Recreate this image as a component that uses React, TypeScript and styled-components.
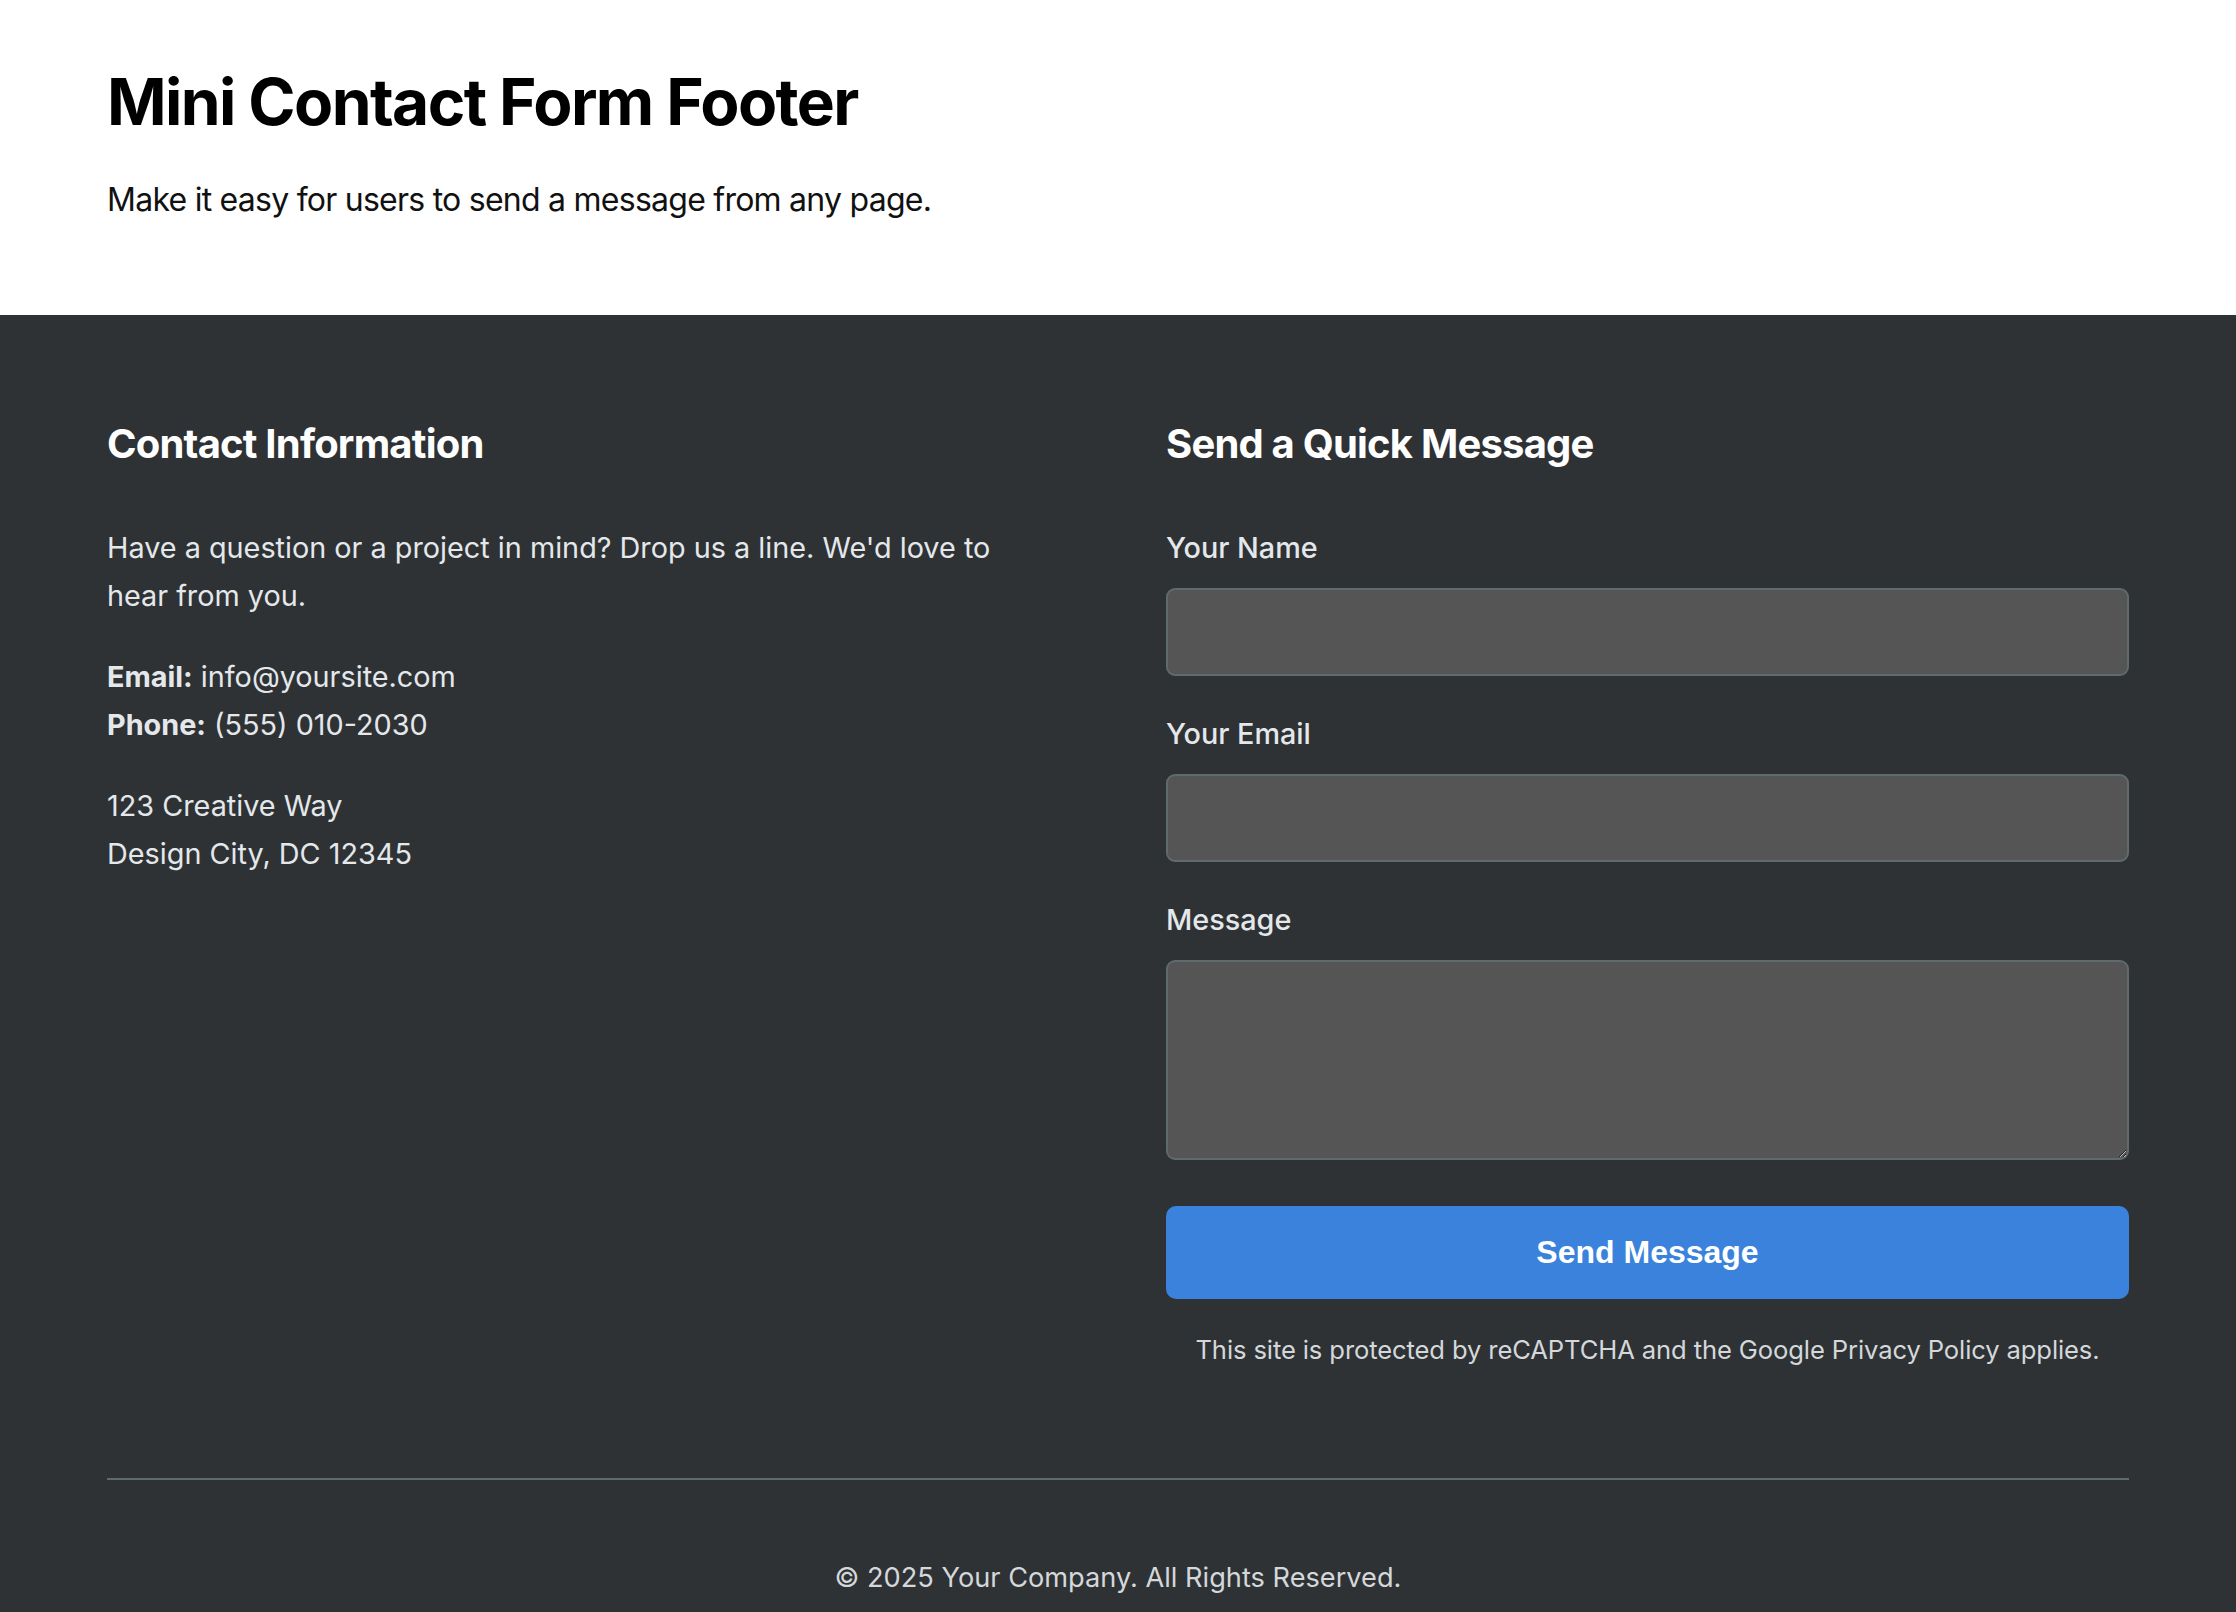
import React from 'react';
import styled, { createGlobalStyle } from 'styled-components';

const GlobalStyle = createGlobalStyle`
  html, body {
    margin: 0;
    padding: 0;
  }

  body {
    font-family: Inter, "Noto Sans", "Liberation Sans", sans-serif;
    background: #2e3235;
    color: #000;
  }

  * {
    box-sizing: border-box;
  }
`

function App() {
  return (
    <>
      <GlobalStyle />
      <Hero>
        <Title>Mini Contact Form Footer</Title>
        <Lead>Make it easy for users to send a message from any page.</Lead>
      </Hero>

      <Footer>
        <Columns>
          <InfoColumn>
            <SectionTitle>Contact Information</SectionTitle>
            <Text>Have a question or a project in mind? Drop us a line. We'd love to hear from you.</Text>
            <Text>
              <Strong>Email:</Strong> info@yoursite.com<br />
              <Strong>Phone:</Strong> (555) 010-2030
            </Text>
            <Text>
              123 Creative Way<br />
              Design City, DC 12345
            </Text>
          </InfoColumn>

          <Column>
            <SectionTitle>Send a Quick Message</SectionTitle>
            <Form onSubmit={e => e.preventDefault()}>
              <Field>
                <Label htmlFor="name">Your Name</Label>
                <Input id="name" type="text" />
              </Field>
              <Field>
                <Label htmlFor="email">Your Email</Label>
                <Input id="email" type="email" />
              </Field>
              <Field>
                <Label htmlFor="message">Message</Label>
                <TextArea id="message" />
              </Field>
              <SubmitButton type="submit">Send Message</SubmitButton>
              <Disclaimer>This site is protected by reCAPTCHA and the Google Privacy Policy applies.</Disclaimer>
            </Form>
          </Column>
        </Columns>

        <Divider />
        <Copyright>© 2025 Your Company. All Rights Reserved.</Copyright>
      </Footer>
    </>
  )
}


const Hero = styled.header`
  background: #ffffff;
  padding: 63px 107px 90px;
`


const Title = styled.h1`
  margin: 0 0 34px;
  font-size: 64px;
  font-weight: 700;
  line-height: 77px;
  letter-spacing: -1.6px;
  color: #000000;
`


const Lead = styled.p`
  margin: 0;
  font-size: 32px;
  line-height: 51px;
  letter-spacing: -0.75px;
  color: #111111;
`


const Footer = styled.footer`
  background: #2e3235;
  color: #e4e8eb;
  padding: 105px 107px 60px;
`


const Columns = styled.div`
  display: grid;
  grid-template-columns: 1fr 1fr;
  gap: 96px;
`


const Column = styled.div`
  display: flex;
  flex-direction: column;
`


const InfoColumn = styled(Column)`
  padding-right: 40px;
`


const SectionTitle = styled.h3`
  margin: 0 0 56px;
  font-size: 40px;
  font-weight: 700;
  line-height: 48px;
  letter-spacing: -0.8px;
  color: #ffffff;
`


const Text = styled.p`
  margin: 0 0 32px;
  font-size: 28.8px;
  line-height: 48.4px;
`


const Strong = styled.strong`
  font-weight: 700;
`


const Form = styled.form`
  display: flex;
  flex-direction: column;
`


const Field = styled.div`
  display: flex;
  flex-direction: column;
  margin-bottom: 33.5px;

  &:last-of-type {
    margin-bottom: 46px;
  }
`


const Label = styled.label`
  margin-bottom: 16px;
  font-size: 28.8px;
  font-weight: 500;
  line-height: 48.4px;
  color: #e4e8eb;
`


const fieldCSS = `
  display: block;
  width: 100%;
  padding: 16px;
  font-family: inherit;
  font-size: 28px;
  color: #ffffff;
  background: #555555;
  border: 2px solid #5f6a6d;
  border-radius: 9px;
  outline: none;
`


const Input = styled.input`
  ${fieldCSS}
  height: 88px;
`


const TextArea = styled.textarea`
  ${fieldCSS}
  height: 200px;
  resize: vertical;
`


const SubmitButton = styled.button`
  height: 93px;
  padding: 0 32px;
  font-family: "Liberation Sans", Arial, sans-serif;
  font-size: 32px;
  font-weight: 700;
  color: #ffffff;
  background: #3b82dc;
  border: none;
  border-radius: 10px;
  cursor: pointer;
`


const Disclaimer = styled.p`
  margin: 32px 0 0;
  font-size: 25.6px;
  line-height: 38.4px;
  letter-spacing: -0.12px;
  text-align: center;
  color: #d4d8db;
`


const Divider = styled.hr`
  margin: 108px 0 78px;
  height: 2px;
  border: none;
  background: #5f6a6d;
`


const Copyright = styled.p`
  margin: 0;
  font-size: 27.2px;
  line-height: 40.8px;
  text-align: center;
  color: #d4d8db;
`


export default App
